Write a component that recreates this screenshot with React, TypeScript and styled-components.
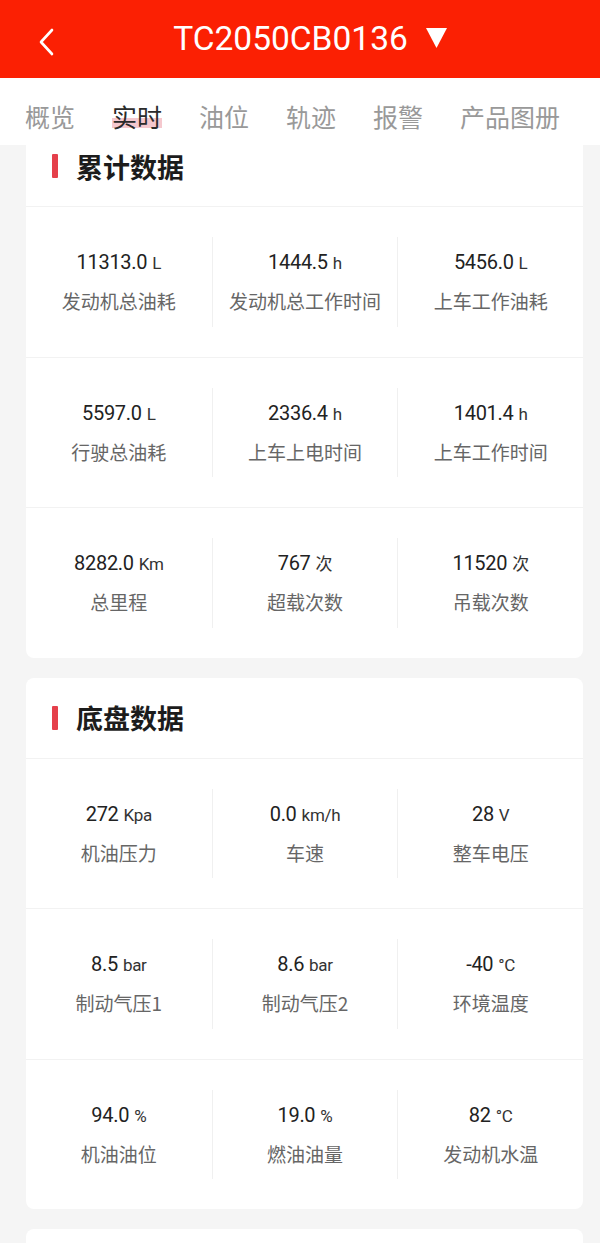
import styled, { createGlobalStyle } from 'styled-components';

const GlobalStyle = createGlobalStyle`
	html, body {
		margin: 0;
		padding: 0;
		overflow: hidden;
		background: #f5f5f5;
		font-family: Roboto, "Noto Sans CJK SC", sans-serif;
	}
	* {
		box-sizing: border-box;
	}
`;

type Item = { value: string; unit: string; label: string };

const totals: Item[][] = [
	[
		{ value: '11313.0', unit: 'L', label: '发动机总油耗' },
		{ value: '1444.5', unit: 'h', label: '发动机总工作时间' },
		{ value: '5456.0', unit: 'L', label: '上车工作油耗' },
	],
	[
		{ value: '5597.0', unit: 'L', label: '行驶总油耗' },
		{ value: '2336.4', unit: 'h', label: '上车上电时间' },
		{ value: '1401.4', unit: 'h', label: '上车工作时间' },
	],
	[
		{ value: '8282.0', unit: 'Km', label: '总里程' },
		{ value: '767', unit: '次', label: '超载次数' },
		{ value: '11520', unit: '次', label: '吊载次数' },
	],
];

const chassis: Item[][] = [
	[
		{ value: '272', unit: 'Kpa', label: '机油压力' },
		{ value: '0.0', unit: 'km/h', label: '车速' },
		{ value: '28', unit: 'V', label: '整车电压' },
	],
	[
		{ value: '8.5', unit: 'bar', label: '制动气压1' },
		{ value: '8.6', unit: 'bar', label: '制动气压2' },
		{ value: '-40', unit: '°C', label: '环境温度' },
	],
	[
		{ value: '94.0', unit: '%', label: '机油油位' },
		{ value: '19.0', unit: '%', label: '燃油油量' },
		{ value: '82', unit: '°C', label: '发动机水温' },
	],
];

const tabs = ['概览', '实时', '油位', '轨迹', '报警', '产品图册'];

const DataCard = ({ title, rows }: { title: string; rows: Item[][] }) => (
	<Card>
		<CardTitle>
			<TitleMark />
			{title}
		</CardTitle>
		{rows.map((row, i) => (
			<Row key={i}>
				{row.map((item) => (
					<Cell key={item.label}>
						<Value>
							{item.value}
							<Unit>{item.unit}</Unit>
						</Value>
						<Label>{item.label}</Label>
					</Cell>
				))}
			</Row>
		))}
	</Card>
);

export default function App() {
	return (
		<>
			<GlobalStyle />
			<Top>
				<Header>
					<Back>
						<svg width="16" height="28" viewBox="0 0 16 28">
							<path d="M13 2 L2 14 L13 26" fill="none" stroke="#fff" strokeWidth="2.6" strokeLinecap="round" strokeLinejoin="round" />
						</svg>
					</Back>
					<Title>
						TC2050CB0136
						<svg width="21" height="20" viewBox="0 0 21 20">
							<path d="M0 0 H21 L10.5 20 Z" fill="#fff" />
						</svg>
					</Title>
				</Header>
				<Tabs>
					{tabs.map((t) => (
						<Tab key={t} $active={t === '实时'}>
							{t}
						</Tab>
					))}
				</Tabs>
			</Top>
			<Content>
				<DataCard title="累计数据" rows={totals} />
				<DataCard title="底盘数据" rows={chassis} />
				<EmptyCard />
			</Content>
		</>
	);
}

const Top = styled.div`
	position: relative;
	z-index: 2;
`;

const Header = styled.div`
	height: 78px;
	background: #fb2003;
	display: flex;
	align-items: center;
	justify-content: center;
	position: relative;
`;

const Back = styled.div`
	position: absolute;
	left: 39px;
	top: 28px;
	width: 16px;
	height: 28px;
	display: flex;
`;

const Title = styled.div`
	display: flex;
	align-items: center;
	gap: 18px;
	padding-left: 20px;
	color: #fff;
	font-size: 33.5px;
	font-family: Roboto, sans-serif;
	line-height: 1;
	svg {
		margin-top: -2px;
	}
`;

const Tabs = styled.div`
	height: 67px;
	background: #fff;
	display: flex;
	align-items: center;
	gap: 37px;
	padding: 9px 0 0 25px;
`;

const Tab = styled.div<{ $active?: boolean }>`
	font-family: "Noto Sans CJK SC", sans-serif;
	font-size: 25px;
	line-height: 34px;
	color: ${({ $active }) => ($active ? '#2b2b2b' : '#999')};
	background: ${({ $active }) =>
		$active ? 'linear-gradient(to bottom, transparent 19px, #f5c8ce 19px, #f5c8ce 29px, transparent 29px)' : 'none'};
`;

const Content = styled.div`
	margin-top: -19px;
	padding: 0 17px 0 26px;
	display: flex;
	flex-direction: column;
	gap: 20px;
`;

const Card = styled.div`
	background: #fff;
	border-radius: 8px;
`;

const EmptyCard = styled(Card)`
	height: 80px;
`;

const CardTitle = styled.div`
	height: 80px;
	display: flex;
	align-items: center;
	gap: 18px;
	padding-left: 26px;
	font-family: "Noto Sans CJK SC", sans-serif;
	font-weight: 700;
	font-size: 27px;
	color: #1c1c1c;
`;

const TitleMark = styled.span`
	width: 6px;
	height: 24px;
	background: #e5404b;
	border-radius: 1px;
`;

const Row = styled.div`
	display: grid;
	grid-template-columns: repeat(3, 1fr);
	padding: 30px 0;
	height: 150.5px;
	border-top: 1px solid #f2f2f2;
`;

const Cell = styled.div`
	display: flex;
	flex-direction: column;
	align-items: center;
	padding-top: 13px;
	gap: 13px;
	& + & {
		border-left: 1px solid #f0f0f0;
	}
`;

const Value = styled.div`
	font-family: Roboto, sans-serif;
	font-size: 20px;
	line-height: 24px;
	color: #222;
	letter-spacing: -0.3px;
`;

const Unit = styled.span`
	font-family: Roboto, "Noto Sans CJK SC", sans-serif;
	font-size: 17px;
	margin-left: 5px;
	color: #333;
`;

const Label = styled.div`
	font-family: "Noto Sans CJK SC", sans-serif;
	font-size: 19px;
	line-height: 26px;
	color: #666;
`;
